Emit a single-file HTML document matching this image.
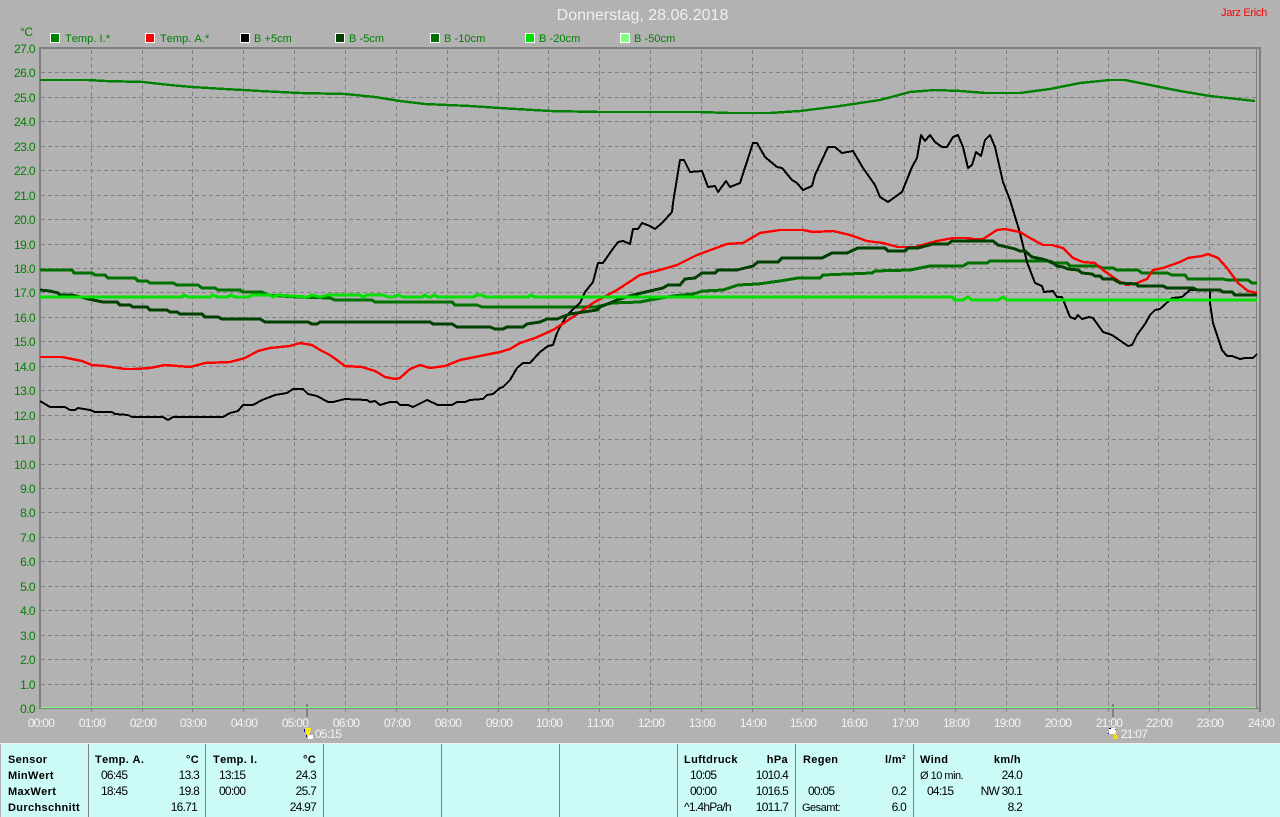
<!DOCTYPE html>
<html><head><meta charset="utf-8">
<style>
html,body{margin:0;padding:0;width:1280px;height:817px;overflow:hidden;background:#b2b2b2}
svg{display:block;font-family:"Liberation Sans",sans-serif;font-kerning:none}
.y{font-size:12px;fill:#008000;text-anchor:end;letter-spacing:-.6px}
.x{font-size:12px;fill:#f4f4f4;text-anchor:middle;letter-spacing:-.75px}
.l{font-size:11px;fill:#008000;letter-spacing:.05px}
.b{font-size:11px;font-weight:bold;fill:#000;letter-spacing:.35px}
.n{font-size:12px;fill:#000;letter-spacing:-.75px}
.e{text-anchor:end}
.s{font-size:11px;letter-spacing:-.5px}
polyline{fill:none;stroke-linejoin:round}
</style></head><body>
<svg width="1280" height="817" viewBox="0 0 1280 817" xmlns="http://www.w3.org/2000/svg">
<rect width="1280" height="817" fill="#b2b2b2"/>
<text x="642.5" y="20" font-size="16" fill="#f0f0f0" text-anchor="middle">Donnerstag, 28.06.2018</text>
<text x="1221" y="16" font-size="11" fill="#ff0000" letter-spacing="-.3">Jarz Erich</text>
<text x="20" y="36" font-size="12" fill="#008000" letter-spacing="-.4">°C</text>

<!-- legend -->
<g stroke="#fff" stroke-width="1">
<rect x="50.5" y="33.5" width="9" height="9" fill="#008000"/>
<rect x="145.5" y="33.5" width="9" height="9" fill="#ff0000"/>
<rect x="240.5" y="33.5" width="9" height="9" fill="#000"/>
<rect x="335.5" y="33.5" width="9" height="9" fill="#004000"/>
<rect x="430.5" y="33.5" width="9" height="9" fill="#007000"/>
<rect x="525.5" y="33.5" width="9" height="9" fill="#00e000"/>
<rect x="620.5" y="33.5" width="9" height="9" fill="#80ff80"/>
</g>
<text class="l" x="65" y="42">Temp. I.*</text>
<text class="l" x="160" y="42">Temp. A.*</text>
<text class="l" x="254" y="42">B +5cm</text>
<text class="l" x="349" y="42">B -5cm</text>
<text class="l" x="444" y="42">B -10cm</text>
<text class="l" x="539" y="42">B -20cm</text>
<text class="l" x="634" y="42">B -50cm</text>

<!-- grid -->
<path shape-rendering="crispEdges" stroke="#808080" stroke-width="1" stroke-dasharray="4 3" fill="none" d="M41 72.5H1257M41 97.5H1257M41 121.5H1257M41 146.5H1257M41 170.5H1257M41 195.5H1257M41 219.5H1257M41 244.5H1257M41 268.5H1257M41 292.5H1257M41 317.5H1257M41 341.5H1257M41 366.5H1257M41 390.5H1257M41 415.5H1257M41 439.5H1257M41 464.5H1257M41 488.5H1257M41 512.5H1257M41 537.5H1257M41 561.5H1257M41 586.5H1257M41 610.5H1257M41 635.5H1257M41 659.5H1257M41 684.5H1257M91.5 50V712M142.5 50V712M192.5 50V712M243.5 50V712M294.5 50V712M345.5 50V712M396.5 50V712M447.5 50V712M498.5 50V712M548.5 50V712M599.5 50V712M650.5 50V712M701.5 50V712M752.5 50V712M802.5 50V712M853.5 50V712M904.5 50V712M955.5 50V712M1006.5 50V712M1057.5 50V712M1108.5 50V712M1158.5 50V712M1209.5 50V712"/>
<!-- axes -->
<g shape-rendering="crispEdges" fill="#808080">
<rect x="39" y="47" width="2" height="662"/>
<rect x="39" y="47" width="1222" height="2"/>
<rect x="39" y="708" width="1222" height="1"/>
<rect x="1256" y="47" width="1" height="662"/>
<rect x="1259" y="47" width="2" height="665"/>
<rect x="306" y="704" width="2" height="13"/>
<rect x="1112" y="704" width="2" height="13"/>
</g>

<!-- zero line B-50 -->
<rect x="41" y="707" width="1215" height="1" fill="#80ff80" shape-rendering="crispEdges"/>

<!-- B -10 -->
<polyline stroke="#007000" stroke-width="3" shape-rendering="crispEdges" points="40,270 72,270 74,273 92,273 95,275 105,275 108,278 135,278 138,281 147,281 150,283 173,283 177,285 198,285 202,288 215,288 218,290 240,290 243,292 262,292 267,295 297,297 330,298 335,300 372,300 375,302 452,302 455,305 477,305 482,307 595,307 600,306 612,303 640,302 650,300 673,296 693,294 703,291 723,290 738,285 758,284 780,281 798,278 820,278 823,275 872,273 875,271 910,270 930,266 963,266 968,263 987,263 990,261 1048,261 1052,263 1067,263 1070,266 1098,266 1102,268 1113,268 1117,270 1138,270 1142,273 1167,273 1172,275 1185,275 1188,279 1223,279 1227,280 1248,280 1252,283 1257,283"/>
<!-- Temp I -->
<polyline stroke="#008000" stroke-width="2.4" shape-rendering="crispEdges" points="40,80 88,80 105,81 143,82 170,85 192,87 225,89 260,91 300,93 345,94 375,97 400,101 425,104 470,106 500,108 550,111 600,112 700,112 730,113 770,113 800,111 840,106 880,100 910,92 935,90 960,91 985,93 1020,93 1050,89 1080,83 1110,80 1125,80 1150,85 1180,91 1210,96 1255,101"/>
<!-- B +5 -->
<polyline stroke="#000" stroke-width="2" shape-rendering="crispEdges" points="40,401 50,407 65,407 70,410 75,410 78,408 90,410 95,412 112,412 115,414 128,415 132,417 163,417 168,420 173,417 223,417 230,413 238,411 243,405 253,405 262,400 270,397 275,395 287,393 293,389 303,389 308,394 317,396 328,402 333,402 345,399 367,400 370,402 375,401 380,405 390,402 397,402 400,405 408,405 413,407 427,400 438,405 452,405 457,402 465,402 470,400 483,399 487,395 493,394 500,388 503,387 510,380 517,368 523,363 530,363 540,352 548,346 553,345 557,333 560,327 567,315 580,303 585,292 593,282 598,263 603,263 612,250 618,242 623,241 630,244 633,229 638,229 642,223 650,226 655,229 662,223 672,212 673,203 680,160 684,160 690,172 702,171 708,187 715,186 718,192 726,181 730,187 740,183 753,143 757,143 765,157 777,167 782,168 792,180 797,183 803,190 812,186 815,175 828,147 835,147 842,153 853,151 863,168 875,185 880,197 888,202 902,192 912,167 917,158 921,135 925,141 930,135 935,142 942,147 947,147 953,137 958,135 963,147 968,168 972,165 976,152 981,156 985,140 990,135 995,147 1003,182 1010,200 1020,233 1027,262 1035,283 1042,286 1044,292 1053,291 1057,297 1062,297 1070,317 1075,319 1078,315 1082,319 1089,317 1093,318 1103,332 1112,335 1128,346 1132,345 1137,335 1145,324 1150,315 1155,310 1160,309 1172,298 1182,297 1190,290 1210,290 1210,303 1213,323 1222,350 1227,356 1232,356 1240,359 1245,358 1253,358 1257,354"/>
<!-- Temp A -->
<polyline stroke="#ff0000" stroke-width="2.4" shape-rendering="crispEdges" points="40,357 62,357 72,359 82,361 92,365 105,366 125,369 135,369 150,368 165,365 190,367 205,363 230,362 245,358 258,351 270,348 290,346 300,343 312,345 320,350 330,355 345,366 362,367 375,371 385,377 395,379 400,378 410,369 420,365 430,368 445,366 460,360 480,356 500,352 510,349 520,343 535,338 553,330 573,317 593,303 617,290 640,275 660,270 677,265 697,255 727,244 743,243 760,233 780,230 803,230 813,232 833,231 850,235 867,241 883,243 898,247 915,247 937,241 953,238 967,238 973,239 983,239 997,230 1005,229 1020,232 1030,238 1043,245 1052,245 1063,248 1073,258 1083,262 1095,263 1103,270 1120,282 1127,285 1137,283 1147,279 1153,270 1163,268 1180,262 1188,258 1202,256 1208,254 1218,258 1227,268 1238,283 1248,291 1257,293"/>
<!-- B -5 -->
<polyline stroke="#004000" stroke-width="3" shape-rendering="crispEdges" points="40,290 50,291 58,293 60,295 72,295 93,300 103,302 117,302 120,305 130,305 133,307 147,307 150,310 167,310 170,312 177,312 180,314 202,314 205,317 218,317 222,319 260,319 265,322 308,322 312,324 317,324 320,322 430,322 433,324 452,324 457,327 490,327 495,329 503,329 507,327 523,327 527,324 540,322 547,319 557,319 562,317 570,314 597,310 600,307 610,303 617,300 633,295 650,291 663,288 668,285 680,285 685,279 695,278 702,273 715,273 718,270 737,270 753,266 758,262 778,262 782,258 822,258 832,253 847,253 858,248 885,248 888,251 905,251 908,248 918,248 933,244 948,244 952,241 993,241 998,245 1007,247 1015,249 1020,251 1025,251 1032,257 1042,259 1052,262 1057,266 1063,267 1068,269 1078,270 1082,273 1092,274 1095,276 1100,276 1103,279 1113,279 1120,283 1137,284 1138,286 1163,286 1167,288 1193,288 1197,290 1220,290 1223,292 1232,292 1235,295 1257,295"/>
<!-- B -20 -->
<polyline stroke="#00e000" stroke-width="3" shape-rendering="crispEdges" points="40,297 182,297 184,295 188,297 210,297 213,295 218,297 227,297 231,295 235,297 248,297 253,295 270,295 273,297 277,295 308,297 312,295 320,297 328,295 360,295 363,297 367,295 383,295 388,297 393,297 398,295 403,297 422,297 425,295 428,297 431,297 434,295 438,297 473,297 477,295 482,295 485,297 528,297 531,295 535,297 952,297 955,300 963,300 968,297 972,300 998,300 1003,297 1007,300 1257,300"/>

<!-- y labels -->
<text class="y" x="35" y="53">27.0</text>
<text class="y" x="35" y="77">26.0</text>
<text class="y" x="35" y="102">25.0</text>
<text class="y" x="35" y="126">24.0</text>
<text class="y" x="35" y="151">23.0</text>
<text class="y" x="35" y="175">22.0</text>
<text class="y" x="35" y="200">21.0</text>
<text class="y" x="35" y="224">20.0</text>
<text class="y" x="35" y="249">19.0</text>
<text class="y" x="35" y="273">18.0</text>
<text class="y" x="35" y="297">17.0</text>
<text class="y" x="35" y="322">16.0</text>
<text class="y" x="35" y="346">15.0</text>
<text class="y" x="35" y="371">14.0</text>
<text class="y" x="35" y="395">13.0</text>
<text class="y" x="35" y="420">12.0</text>
<text class="y" x="35" y="444">11.0</text>
<text class="y" x="35" y="469">10.0</text>
<text class="y" x="35" y="493">9.0</text>
<text class="y" x="35" y="517">8.0</text>
<text class="y" x="35" y="542">7.0</text>
<text class="y" x="35" y="566">6.0</text>
<text class="y" x="35" y="591">5.0</text>
<text class="y" x="35" y="615">4.0</text>
<text class="y" x="35" y="640">3.0</text>
<text class="y" x="35" y="664">2.0</text>
<text class="y" x="35" y="689">1.0</text>
<text class="y" x="35" y="713">0.0</text>

<!-- x labels -->
<text class="x" x="41" y="727">00:00</text>
<text class="x" x="92" y="727">01:00</text>
<text class="x" x="143" y="727">02:00</text>
<text class="x" x="193" y="727">03:00</text>
<text class="x" x="244" y="727">04:00</text>
<text class="x" x="295" y="727">05:00</text>
<text class="x" x="346" y="727">06:00</text>
<text class="x" x="397" y="727">07:00</text>
<text class="x" x="448" y="727">08:00</text>
<text class="x" x="499" y="727">09:00</text>
<text class="x" x="549" y="727">10:00</text>
<text class="x" x="600" y="727">11:00</text>
<text class="x" x="651" y="727">12:00</text>
<text class="x" x="702" y="727">13:00</text>
<text class="x" x="753" y="727">14:00</text>
<text class="x" x="803" y="727">15:00</text>
<text class="x" x="854" y="727">16:00</text>
<text class="x" x="905" y="727">17:00</text>
<text class="x" x="956" y="727">18:00</text>
<text class="x" x="1007" y="727">19:00</text>
<text class="x" x="1058" y="727">20:00</text>
<text class="x" x="1109" y="727">21:00</text>
<text class="x" x="1159" y="727">22:00</text>
<text class="x" x="1210" y="727">23:00</text>
<text class="x" x="1261" y="727">24:00</text>
<text class="x" x="328" y="738">05:15</text>
<text class="x" x="1134" y="738">21:07</text>

<!-- sun icons -->
<g shape-rendering="crispEdges">
<rect x="308" y="735" width="5" height="4" fill="#fff"/>
<path d="M304 729h1v3h-1zM306 735h1v2h-1z" fill="#000080"/>
<polygon points="305,728 311,728 310,733 308,737 306,733" fill="#ffee00"/>
<rect x="1109" y="728" width="7" height="6" fill="#fff"/>
<path d="M1109 728h2v1h-2zM1115 729h1v1h-1zM1108 733h1v1h-1z" fill="#000080"/>
<polygon points="1115,732 1118,738 1117,739 1114,739 1113,738" fill="#ffd800"/>
</g>

<!-- bottom panel -->
<rect x="0" y="743" width="1280" height="1" fill="#f0f0f0" shape-rendering="crispEdges"/>
<rect x="1" y="744" width="1279" height="73" fill="#ccfbf7" shape-rendering="crispEdges"/>
<g fill="#808080" shape-rendering="crispEdges">
<rect x="88" y="744" width="1" height="73"/>
<rect x="205" y="744" width="1" height="73"/>
<rect x="323" y="744" width="1" height="73"/>
<rect x="441" y="744" width="1" height="73"/>
<rect x="559" y="744" width="1" height="73"/>
<rect x="677" y="744" width="1" height="73"/>
<rect x="795" y="744" width="1" height="73"/>
<rect x="913" y="744" width="1" height="73"/>
</g>

<text class="b" x="8" y="763">Sensor</text>
<text class="b" x="8" y="779">MinWert</text>
<text class="b" x="8" y="795">MaxWert</text>
<text class="b" x="8" y="811">Durchschnitt</text>

<text class="b" x="95" y="763">Temp. A.</text>
<text class="b e" x="199" y="763">°C</text>
<text class="n" x="101" y="779">06:45</text>
<text class="n e" x="199" y="779">13.3</text>
<text class="n" x="101" y="795">18:45</text>
<text class="n e" x="199" y="795">19.8</text>
<text class="n e" x="197" y="811">16.71</text>

<text class="b" x="213" y="763">Temp. I.</text>
<text class="b e" x="316" y="763">°C</text>
<text class="n" x="219" y="779">13:15</text>
<text class="n e" x="316" y="779">24.3</text>
<text class="n" x="219" y="795">00:00</text>
<text class="n e" x="316" y="795">25.7</text>
<text class="n e" x="316" y="811">24.97</text>

<text class="b" x="684" y="763">Luftdruck</text>
<text class="b e" x="788" y="763">hPa</text>
<text class="n" x="690" y="779">10:05</text>
<text class="n e" x="788" y="779">1010.4</text>
<text class="n" x="690" y="795">00:00</text>
<text class="n e" x="788" y="795">1016.5</text>
<text class="n" x="684" y="811">^1.4hPa/h</text>
<text class="n e" x="788" y="811">1011.7</text>

<text class="b" x="803" y="763">Regen</text>
<text class="b e" x="906" y="763">l/m²</text>
<text class="n" x="808" y="795">00:05</text>
<text class="n e" x="906" y="795">0.2</text>
<text class="n s" x="802" y="811">Gesamt:</text>
<text class="n e" x="906" y="811">6.0</text>

<text class="b" x="920" y="763">Wind</text>
<text class="b e" x="1021" y="763">km/h</text>
<text class="n s" x="920" y="779">Ø 10 min.</text>
<text class="n e" x="1022" y="779">24.0</text>
<text class="n" x="927" y="795">04:15</text>
<text class="n e" x="1022" y="795">NW 30.1</text>
<text class="n e" x="1022" y="811">8.2</text>
</svg>
</body></html>
